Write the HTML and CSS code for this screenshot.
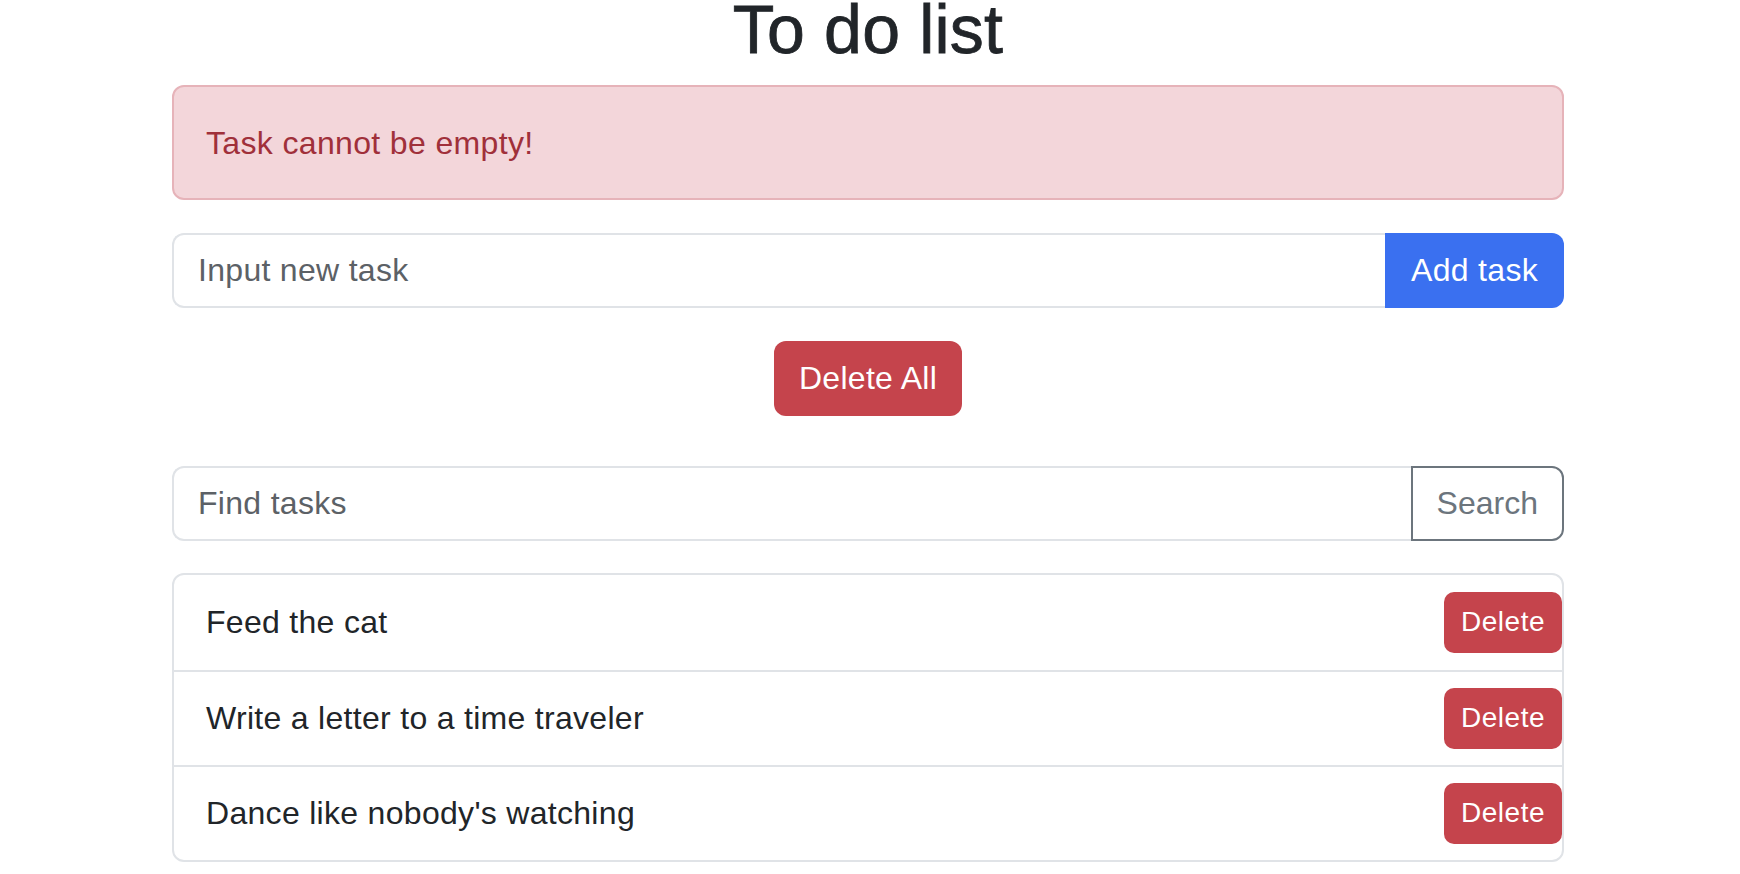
FILE: index.html
```html
<!DOCTYPE html>
<html lang="en">
<head>
<meta charset="utf-8">
<title>To do list</title>
<link rel="stylesheet" href="styles.css">
</head>
<body>
<main class="container">
  <h1 class="title">To do list</h1>
  <div class="alert" role="alert">Task cannot be empty!</div>
  <form class="input-group add-group">
    <input class="field" type="text" placeholder="Input new task">
    <button class="btn btn-primary btn-end" type="button">Add task</button>
  </form>
  <div class="center-row">
    <button class="btn btn-danger btn-delete-all" type="button">Delete All</button>
  </div>
  <form class="input-group search-group">
    <input class="field" type="text" placeholder="Find tasks">
    <button class="btn btn-outline btn-end" type="button">Search</button>
  </form>
  <ul class="task-list">
    <li class="task"><span class="task-text">Feed the cat</span><button class="btn btn-danger btn-sm" type="button">Delete</button></li>
    <li class="task"><span class="task-text">Write a letter to a time traveler</span><button class="btn btn-danger btn-sm" type="button">Delete</button></li>
    <li class="task"><span class="task-text">Dance like nobody's watching</span><button class="btn btn-danger btn-sm" type="button">Delete</button></li>
  </ul>
</main>
</body>
</html>
```

FILE: styles.css
```css
* {
  box-sizing: border-box;
}

body {
  margin: 0;
  padding-right: 4px;
  background: #ffffff;
  font-family: "Liberation Sans", Arial, sans-serif;
  color: #212529;
}

.container {
  width: 1392px;
  margin: 0 auto;
}

.title {
  margin: -11px 0 14px;
  font-size: 68px;
  font-weight: 500;
  letter-spacing: 0.2px;
  line-height: 1.2;
  text-align: center;
  color: #212529;
  -webkit-text-stroke: 0.8px #212529;
}

.alert {
  display: flex;
  align-items: center;
  height: 115px;
  margin-bottom: 33px;
  padding: 3px 32px 0;
  background: #f3d6da;
  border: 2px solid #e6b3b9;
  border-radius: 12px;
  color: #a0303a;
  font-size: 32px;
  letter-spacing: 0.35px;
}

.input-group {
  display: flex;
  height: 75px;
}

.add-group {
  margin: 0 0 33px;
}

.search-group {
  margin: 0 0 32px;
}

.field {
  flex: 1;
  min-width: 0;
  height: 100%;
  padding: 0 24px;
  border: 2px solid #e0e3e7;
  border-right: none;
  border-radius: 12px 0 0 12px;
  background: #fff;
  font-family: inherit;
  font-size: 32px;
  letter-spacing: 0.3px;
  color: #212529;
  outline: none;
}

.field::placeholder {
  color: #5c6166;
  opacity: 1;
}

.btn {
  height: 100%;
  padding: 0 24px;
  border: none;
  border-radius: 12px;
  font-family: inherit;
  font-size: 32px;
  letter-spacing: 0.3px;
  line-height: 1;
  cursor: pointer;
}

.btn-end {
  border-radius: 0 12px 12px 0;
}

.btn-primary {
  padding: 0 26px;
  background: #3a70f0;
  color: #ffffff;
}

.btn-danger {
  background: #c5444c;
  color: #ffffff;
}

.btn-outline {
  background: #ffffff;
  border: 2px solid #6c757d;
  color: #6c757d;
  letter-spacing: 0;
}

.center-row {
  display: flex;
  justify-content: center;
  margin-bottom: 50px;
}

.btn-delete-all {
  height: 75px;
  padding: 0 25px;
}

.task-list {
  margin: 0;
  padding: 0;
  list-style: none;
  border: 2px solid #e0e3e7;
  border-radius: 12px;
}

.task {
  display: flex;
  align-items: center;
  justify-content: space-between;
  height: 95px;
  padding-left: 32px;
  font-size: 32px;
  letter-spacing: 0.3px;
}

.task + .task {
  border-top: 2px solid #e0e3e7;
}

.btn-sm {
  height: 61px;
  padding: 0 17px;
  border-radius: 10px;
  font-size: 28px;
  letter-spacing: 0.5px;
}
```
